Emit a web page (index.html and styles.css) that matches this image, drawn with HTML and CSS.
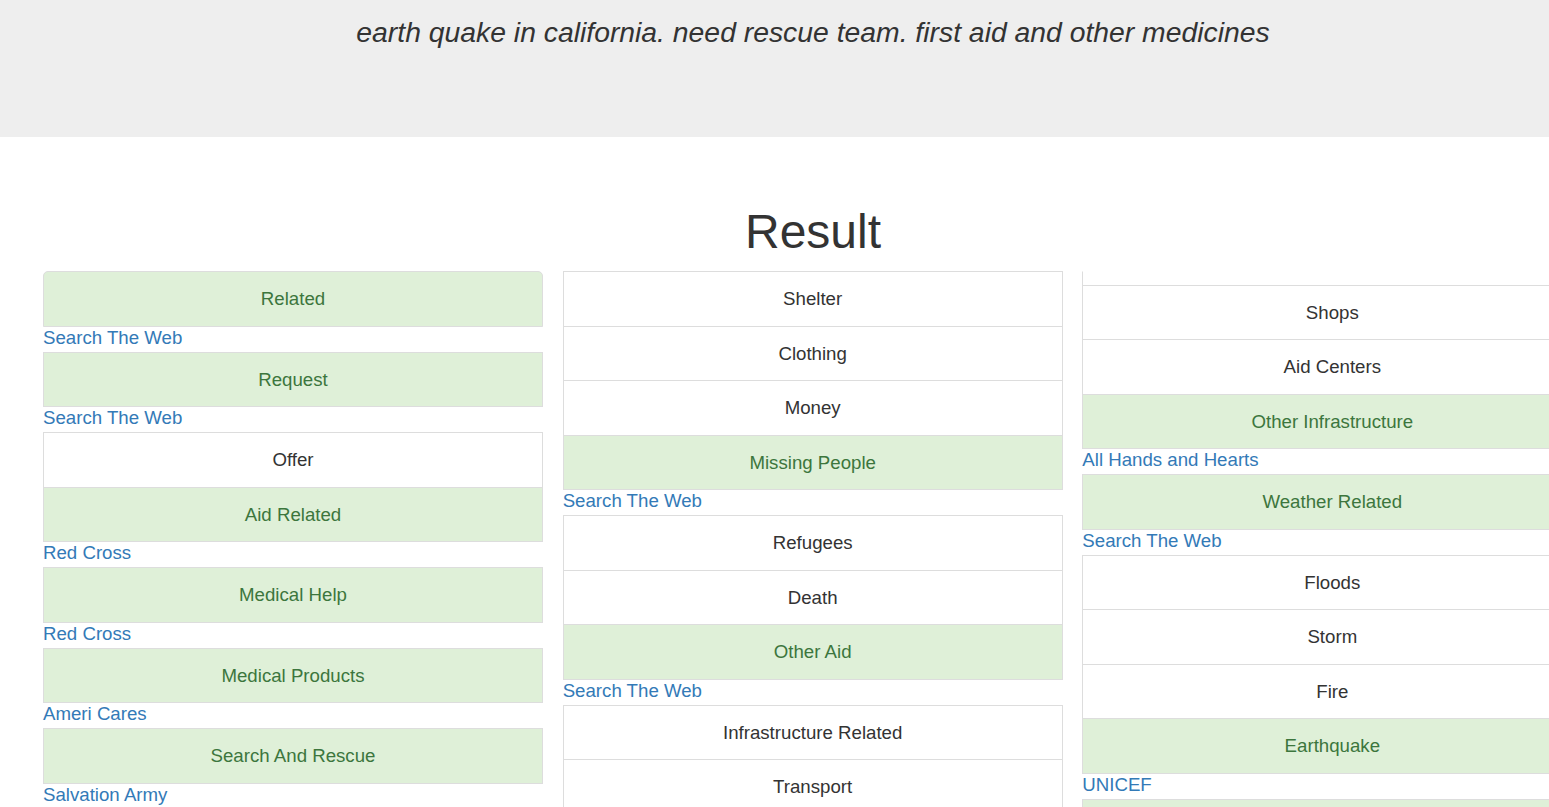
FILE: index.html
```html
<!DOCTYPE html>
<html>
<head>
<meta charset="utf-8">
<title>Disaster Response</title>
<link rel="stylesheet" href="styles.css">
</head>
<body>
<div class="jumbotron">
  <div class="container">
    <p class="message">earth quake in california. need rescue team. first aid and other medicines</p>
  </div>
</div>
<div class="container">
  <h1 class="title">Result</h1>
  <div class="columns">
    <div class="col">
      <div class="group"><div class="item success first">Related</div></div>
      <a class="link" href="#">Search The Web</a>
      <div class="group"><div class="item success">Request</div></div>
      <a class="link" href="#">Search The Web</a>
      <div class="group">
        <div class="item">Offer</div>
        <div class="item success">Aid Related</div>
      </div>
      <a class="link" href="#">Red Cross</a>
      <div class="group"><div class="item success">Medical Help</div></div>
      <a class="link" href="#">Red Cross</a>
      <div class="group"><div class="item success">Medical Products</div></div>
      <a class="link" href="#">Ameri Cares</a>
      <div class="group"><div class="item success">Search And Rescue</div></div>
      <a class="link" href="#">Salvation Army</a>
    </div>
    <div class="col">
      <div class="group">
        <div class="item">Shelter</div>
        <div class="item">Clothing</div>
        <div class="item">Money</div>
        <div class="item success">Missing People</div>
      </div>
      <a class="link" href="#">Search The Web</a>
      <div class="group">
        <div class="item">Refugees</div>
        <div class="item">Death</div>
        <div class="item success">Other Aid</div>
      </div>
      <a class="link" href="#">Search The Web</a>
      <div class="group">
        <div class="item">Infrastructure Related</div>
        <div class="item">Transport</div>
        <div class="item">Buildings</div>
      </div>
    </div>
    <div class="col">
      <div class="group">
        <div class="item cut"></div>
        <div class="item">Shops</div>
        <div class="item">Aid Centers</div>
        <div class="item success">Other Infrastructure</div>
      </div>
      <a class="link" href="#">All Hands and Hearts</a>
      <div class="group"><div class="item success">Weather Related</div></div>
      <a class="link" href="#">Search The Web</a>
      <div class="group">
        <div class="item">Floods</div>
        <div class="item">Storm</div>
        <div class="item">Fire</div>
        <div class="item success">Earthquake</div>
      </div>
      <a class="link" href="#">UNICEF</a>
      <div class="group"><div class="item success">Cold</div></div>
    </div>
  </div>
</div>
</body>
</html>
```
FILE: styles.css
```css
html {
  overflow: hidden;
}
body {
  margin: 0;
  font-family: "Liberation Sans", Arial, Helvetica, sans-serif;
  color: #333;
  background: #fff;
}
.container {
  width: 1540px;
  margin-left: 43px;
}
.jumbotron {
  background: #eee;
  height: 137px;
  box-sizing: border-box;
  padding-top: 14px;
}
.message {
  margin: 0;
  text-align: center;
  font-style: italic;
  font-size: 28.33px;
  line-height: 36px;
  color: #333;
}
.title {
  margin: 66px 0 11px;
  text-align: center;
  font-size: 48px;
  font-weight: 500;
  line-height: 57px;
  color: #333;
}
.columns {
  display: grid;
  grid-template-columns: 500px 500px 500px;
  column-gap: 19.67px;
  align-items: start;
}
.col {
  display: flex;
  flex-direction: column;
}
.group {
  display: flex;
  flex-direction: column;
}
.item {
  border: 1px solid #ddd;
  background: #fff;
  padding: 14px 15px;
  margin-bottom: -1px;
  text-align: center;
  font-size: 18.67px;
  line-height: 25.5px;
  color: #333;
}
.item:last-child {
  margin-bottom: 0;
}
.item.first {
  border-top-left-radius: 5px;
  border-top-right-radius: 5px;
}
.item.success {
  background: #dff0d8;
  color: #3c763d;
}
.item.cut {
  border-top-color: transparent;
  padding: 0;
  height: 12.5px;
}
.link {
  display: block;
  font-size: 18.67px;
  line-height: 22px;
  padding-bottom: 3px;
  color: #337ab7;
  text-decoration: none;
}
```
